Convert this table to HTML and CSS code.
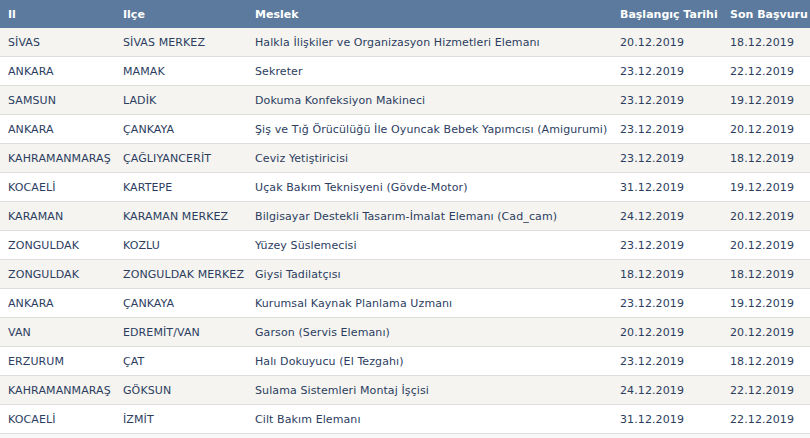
FILE: index.html
```html
<!DOCTYPE html>
<html lang="tr">
<head>
<meta charset="utf-8">
<title>İlanlar</title>
<link rel="stylesheet" href="styles.css">
</head>
<body>
<table class="jobs">
  <colgroup>
    <col class="c-il"><col class="c-ilce"><col class="c-meslek"><col class="c-bas"><col class="c-son">
  </colgroup>
  <thead>
    <tr><th>Il</th><th>Ilçe</th><th>Meslek</th><th>Başlangıç Tarihi</th><th>Son Başvuru</th></tr>
  </thead>
  <tbody>
    <tr><td>SİVAS</td><td>SİVAS MERKEZ</td><td>Halkla İlişkiler ve Organizasyon Hizmetleri Elemanı</td><td>20.12.2019</td><td>18.12.2019</td></tr>
    <tr><td>ANKARA</td><td>MAMAK</td><td>Sekreter</td><td>23.12.2019</td><td>22.12.2019</td></tr>
    <tr><td>SAMSUN</td><td>LADİK</td><td>Dokuma Konfeksiyon Makineci</td><td>23.12.2019</td><td>19.12.2019</td></tr>
    <tr><td>ANKARA</td><td>ÇANKAYA</td><td>Şiş ve Tığ Örücülüğü İle Oyuncak Bebek Yapımcısı (Amigurumi)</td><td>23.12.2019</td><td>20.12.2019</td></tr>
    <tr><td>KAHRAMANMARAŞ</td><td>ÇAĞLIYANCERİT</td><td>Ceviz Yetiştiricisi</td><td>23.12.2019</td><td>18.12.2019</td></tr>
    <tr><td>KOCAELİ</td><td>KARTEPE</td><td>Uçak Bakım Teknisyeni (Gövde-Motor)</td><td>31.12.2019</td><td>19.12.2019</td></tr>
    <tr><td>KARAMAN</td><td>KARAMAN MERKEZ</td><td>Bilgisayar Destekli Tasarım-İmalat Elemanı (Cad_cam)</td><td>24.12.2019</td><td>20.12.2019</td></tr>
    <tr><td>ZONGULDAK</td><td>KOZLU</td><td>Yüzey Süslemecisi</td><td>23.12.2019</td><td>20.12.2019</td></tr>
    <tr><td>ZONGULDAK</td><td>ZONGULDAK MERKEZ</td><td>Giysi Tadilatçısı</td><td>18.12.2019</td><td>18.12.2019</td></tr>
    <tr><td>ANKARA</td><td>ÇANKAYA</td><td>Kurumsal Kaynak Planlama Uzmanı</td><td>23.12.2019</td><td>19.12.2019</td></tr>
    <tr><td>VAN</td><td>EDREMİT/VAN</td><td>Garson (Servis Elemanı)</td><td>20.12.2019</td><td>20.12.2019</td></tr>
    <tr><td>ERZURUM</td><td>ÇAT</td><td>Halı Dokuyucu (El Tezgahı)</td><td>23.12.2019</td><td>18.12.2019</td></tr>
    <tr><td>KAHRAMANMARAŞ</td><td>GÖKSUN</td><td>Sulama Sistemleri Montaj İşçisi</td><td>24.12.2019</td><td>22.12.2019</td></tr>
    <tr><td>KOCAELİ</td><td>İZMİT</td><td>Cilt Bakım Elemanı</td><td>31.12.2019</td><td>22.12.2019</td></tr>
  </tbody>
</table>
</body>
</html>
```

FILE: styles.css
```css
html, body {
  margin: 0;
  padding: 0;
  background: #f8f8f8;
  font-family: "DejaVu Sans", Verdana, sans-serif;
  font-size: 11px;
  color: #2c3d5f;
}

.jobs {
  width: 810px;
  border-collapse: collapse;
  table-layout: fixed;
}

.c-il { width: 115px; }
.c-ilce { width: 132px; }
.c-meslek { width: 365px; }
.c-bas { width: 110px; }
.c-son { width: 88px; }

.jobs th {
  background: #5b7a9d;
  color: #ffffff;
  font-weight: bold;
  text-align: left;
  height: 28px;
  padding: 0 0 0 8px;
  white-space: nowrap;
  vertical-align: middle;
}

.jobs td {
  height: 27px;
  padding: 1px 0 0 8px;
  border-bottom: 1px solid #dddddd;
  white-space: nowrap;
  vertical-align: middle;
  letter-spacing: 0.1px;
}

.jobs tbody tr:nth-child(odd) td { background: #f5f4f0; }
.jobs tbody tr:nth-child(even) td { background: #ffffff; }
```
